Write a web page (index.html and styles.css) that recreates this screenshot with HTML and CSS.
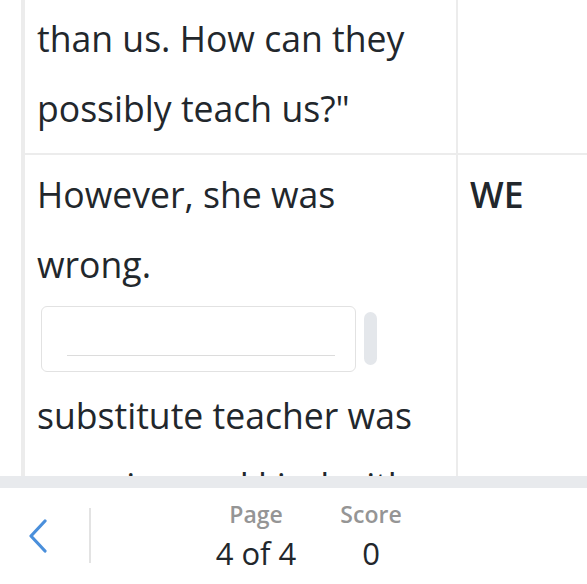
FILE: index.html
```html
<!DOCTYPE html>
<html>
<head>
<meta charset="utf-8">
<link rel="stylesheet" href="styles.css">
</head>
<body>
<div class="screen">
  <div class="content">
    <div class="story">
      <div class="row">
        <div class="cell text">than us. How can they<br>possibly teach us?"</div>
        <div class="cell side"></div>
      </div>
      <div class="row">
        <div class="cell text">
          <p class="line">However, she was<br>wrong.</p>
          <div class="answer">
            <div class="input"><span class="underline"></span></div>
            <span class="handle"></span>
          </div>
          <p class="line">substitute teacher was<br>amazing and kind with kids.</p>
        </div>
        <div class="cell side"><span class="word">WE</span></div>
      </div>
    </div>
  </div>
  <div class="band"></div>
  <footer class="footer">
    <button class="back" aria-label="Back">
      <svg width="22" height="34" viewBox="0 0 22 34"><path d="M18 2 L4 17 L18 32" fill="none" stroke="#4a8fdb" stroke-width="3.2" stroke-linecap="round" stroke-linejoin="round"/></svg>
    </button>
    <span class="divider"></span>
    <div class="stats">
      <div class="stat"><span class="label">Page</span><span class="value">4 of 4</span></div>
      <div class="stat"><span class="label">Score</span><span class="value">0</span></div>
    </div>
  </footer>
</div>
</body>
</html>
```
FILE: styles.css
```css
* { box-sizing: border-box; }
html, body { margin: 0; padding: 0; background: #fff; }
body { font-family: "Open Sans", "Liberation Sans", sans-serif; color: #22272c; }
.screen { width: 587px; height: 584px; display: flex; flex-direction: column; overflow: hidden; }
.content { height: 476px; overflow: hidden; padding-left: 21px; }
.story { border-left: 4px solid #ececec; height: 100%; }
.row { display: grid; grid-template-columns: 433px 1fr; border-bottom: 2px solid #ececec; }
.row:last-child { border-bottom: none; height: 100%; }
.cell { padding: 3px 12px 10px; font-size: 35.6px; line-height: 70px; }
.text { border-right: 2px solid #ececec; }
.side { padding-top: 4px; }
.row + .row .text { padding-top: 4px; }
.line { margin: 0; }
.word { font-weight: 600; }
.answer { display: flex; align-items: flex-start; gap: 8px; margin: 7px 0 8px 4px; }
.input { width: 315px; height: 66px; border: 1.5px solid #e2e2e2; border-radius: 6px; padding: 0 20px 15px 25px; display: flex; align-items: flex-end; }
.underline { display: block; width: 268px; height: 1.5px; background: #dcdcdc; }
.handle { width: 13px; height: 53px; margin-top: 6px; border-radius: 7px; background: #e4e7eb; }
.band { height: 12px; background: #e8eaed; flex: none; }
.footer { flex: 1; display: flex; align-items: center; }
.back { width: 89px; height: 56px; border: none; background: none; padding: 0 0 0 27px; display: flex; align-items: center; }
.divider { width: 2px; height: 55px; background: #e3e3e3; margin-top: -1px; }
.stats { display: flex; gap: 25px; margin-left: 120px; }
.stat { min-width: 90px; display: flex; flex-direction: column; align-items: center; }
.label { font-size: 23px; line-height: 32px; color: #959595; font-weight: 600; }
.value { font-size: 31px; line-height: 43px; margin-top: 2px; color: #22272c; }
```
